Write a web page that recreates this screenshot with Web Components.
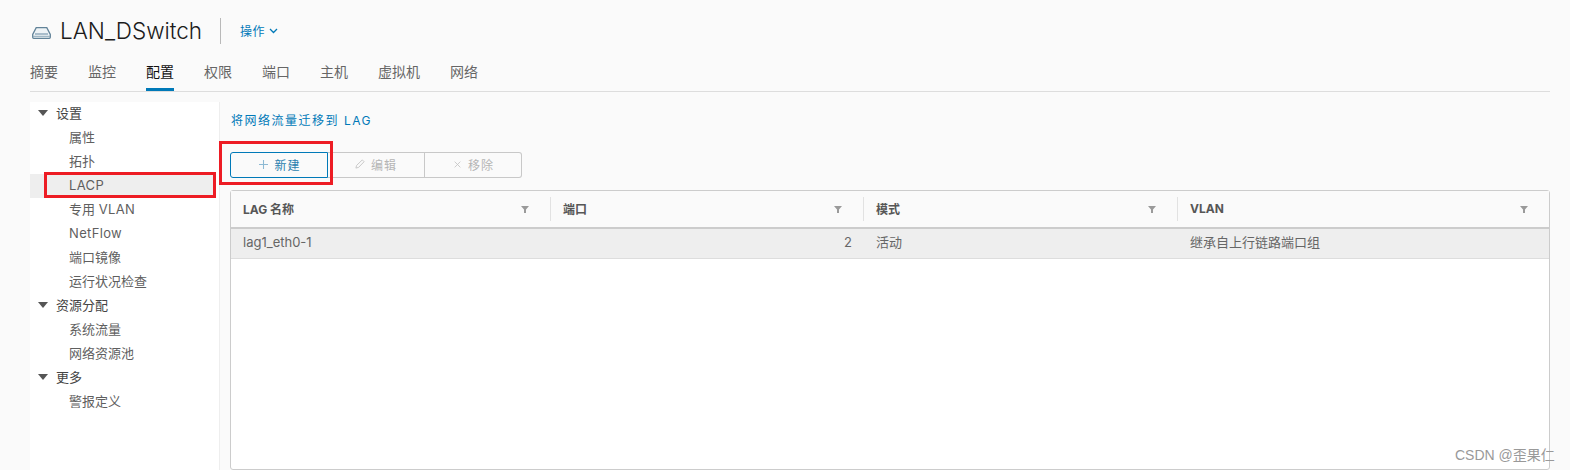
<!DOCTYPE html>
<html lang="zh">
<head>
<meta charset="utf-8">
<title>LAN_DSwitch</title>
<style>
  html, body { margin: 0; height: 470px; overflow: hidden; background: #fafafa; }
  body { font-family: Inter, "Noto Sans CJK SC", sans-serif; color: #565656; }
</style>
</head>
<body>
<vc-page>
  <vc-header slot="header" name="LAN_DSwitch" action="操作"></vc-header>
  <vc-tabs slot="tabs" active="配置" items="摘要,监控,配置,权限,端口,主机,虚拟机,网络"></vc-tabs>
  <vc-tree slot="side"></vc-tree>
  <lag-panel slot="main"></lag-panel>
</vc-page>
<script>
class VcPage extends HTMLElement {
    constructor() {
        super();
        this.attachShadow({ mode: 'open' });
        this.shadowRoot.innerHTML = `
        <style>
            :host { display: block; height: 470px; position: relative; overflow: hidden; }
            .body { display: flex; padding: 10px 20px 0 30px; height: 368px; }
            .side { flex: 0 0 190px; }
            .main { flex: 1; min-width: 0; padding-left: 10px; }
            .mark {
                position: absolute; left: 1455px; top: 444px;
                font: 14px "Liberation Sans", "Noto Sans CJK SC", sans-serif; color: #999; white-space: nowrap;
            }
            .note { position: absolute; border: 3px solid #ed1c24; box-sizing: border-box; }
        </style>
        <slot name="header"></slot>
        <slot name="tabs"></slot>
        <div class="body">
            <div class="side"><slot name="side"></slot></div>
            <div class="main"><slot name="main"></slot></div>
        </div>
        <div class="note" style="left:44px;top:172px;width:172px;height:26px"></div>
        <div class="note" style="left:219px;top:141px;width:114px;height:44px"></div>
        <div class="mark">CSDN @歪果仁</div>`;
    }
}

class VcHeader extends HTMLElement {
    constructor() {
        super();
        this.attachShadow({ mode: 'open' });
    }

    connectedCallback() {
        this.shadowRoot.innerHTML = `
        <style>
            :host { display: flex; align-items: center; height: 61px; padding: 0 0 0 32px; box-sizing: border-box; }
            svg.sw { width: 19px; height: 12px; margin-right: 9px; margin-top: 5px; }
            .name { font-size: 22.500px; font-weight: 300; color: #1b1b1b; line-height: 30px; white-space: nowrap; }
            .sep { width: 1px; height: 26px; background: #b9b9b9; margin: 0 19px 0 18px; }
            .act { display: flex; align-items: center; gap: 4px; font-size: 12px; color: #0079b8; letter-spacing: .5px; }
            .act svg { width: 9px; height: 6px; }
        </style>
        <svg class="sw" viewBox="0 0 19 12">
            <path d="M4.200.7h10.600L18.300 7.500v2.800a1 1 0 0 1-1 1H1.700a1 1 0 0 1-1-1V7.500z" fill="#eef3f6" stroke="#628399" stroke-width="1.300"/>
            <path d="M3 6h13v2H3z" fill="#a9bdcb"/>
            <path d="M1 9.300h17" stroke="#8ea8ba"/>
        </svg>
        <span class="name">${this.getAttribute('name')}</span>
        <span class="sep"></span>
        <span class="act">${this.getAttribute('action')}
            <svg viewBox="0 0 9 6"><path d="M1 1l3.500 3.500L8 1" fill="none" stroke="#0079b8" stroke-width="1.300"/></svg>
        </span>`;
    }
}

class VcTabs extends HTMLElement {
    constructor() {
        super();
        this.attachShadow({ mode: 'open' });
    }

    connectedCallback() {
        const active = this.getAttribute('active');
        const tabs = this.getAttribute('items').split(',').map(t =>
            `<span class="tab ${t === active ? 'on' : ''}">${t}</span>`).join('');
        this.shadowRoot.innerHTML = `
        <style>
            :host { display: flex; gap: 30px; height: 30px; margin: 0 20px 0 30px; border-bottom: 1px solid #ddd; }
            .tab { font-size: 14px; line-height: 22px; color: #666; height: 27px; }
            .on { color: #111; border-bottom: 3px solid #0079b8; }
        </style>
        ${tabs}`;
    }
}

class VcTree extends HTMLElement {
    constructor() {
        super();
        this.attachShadow({ mode: 'open' });
        this.groups = [
            ['设置', ['属性', '拓扑', 'LACP', '专用 VLAN', 'NetFlow', '端口镜像', '运行状况检查']],
            ['资源分配', ['系统流量', '网络资源池']],
            ['更多', ['警报定义']]
        ];
    }

    connectedCallback() {
        const latin = s => s.replace(/[A-Za-z]+/g, m => `<span class="l">${m}</span>`);
        const rows = this.groups.map(([name, kids]) => `
            <div class="row head"><i></i>${name}</div>
            ${kids.map(k => `<div class="row kid ${k === 'LACP' ? 'sel' : ''}">${latin(k)}</div>`).join('')}`).join('');
        this.shadowRoot.innerHTML = `
        <style>
            :host { display: block; height: 100%; background: #fff; border-right: 1px solid #eee; box-sizing: border-box; }
            .row { height: 24px; line-height: 22px; font-size: 13px; color: #5f5f5f; white-space: nowrap; margin-right: 3px; }
            .head { display: flex; align-items: center; padding: 0 0 2px 8px; box-sizing: border-box; color: #444; }
            .head i { width: 0; height: 0; margin-right: 8px; border: 5px solid transparent; border-top: 6px solid #555; border-bottom: 0; }
            .kid { padding-left: 39px; }
            .l { letter-spacing: .35px; }
            .sel { background: #eee; }
        </style>
        ${rows}`;
    }
}

class LagPanel extends HTMLElement {
    constructor() {
        super();
        this.attachShadow({ mode: 'open' });
        this.shadowRoot.innerHTML = `
        <style>
            :host { display: block; }
            .link { font-size: 12px; letter-spacing: 1.500px; color: #0079b8; line-height: 16px; margin: 11px 0 0 1px; }
            .btns { display: flex; margin-top: 23px; height: 26px; }
            .btn {
                display: flex; align-items: center; justify-content: center; gap: 6px; box-sizing: border-box; padding-bottom: 2px;
                border: 1px solid #c8c8c8; border-left: 0; font-size: 12px; letter-spacing: 1px; color: #b5b5b5;
            }
            .btn svg { width: 10px; height: 10px; }
            .new { width: 98px; padding-left: 2px; border: 1px solid #0079b8; border-radius: 3px 0 0 3px; color: #2a7fae; }
            .new svg { width: 9px; height: 9px; }
            .edit { width: 97px; }
            .del { width: 97px; padding-left: 2px; border-radius: 0 3px 3px 0; }
            .del svg { width: 7px; height: 7px; margin-right: 1px; }
        </style>
        <div class="link">将网络流量迁移到 LAG</div>
        <div class="btns">
            <div class="btn new"><svg viewBox="0 0 11 11"><path d="M5.500 0v11M0 5.500h11" stroke="#8db9d3" stroke-width="1.300"/></svg>新建</div>
            <div class="btn edit"><svg viewBox="0 0 11 11"><path d="M1 10l.8-3L8 1l2 2-6 6.200z" fill="none" stroke="#c4c4c4"/></svg>编辑</div>
            <div class="btn del"><svg viewBox="0 0 11 11"><path d="M1 1l9 9M10 1l-9 9" stroke="#c4c4c4" stroke-width="1.300"/></svg>移除</div>
        </div>
        <lag-grid></lag-grid>`;
    }
}

class LagGrid extends HTMLElement {
    constructor() {
        super();
        this.attachShadow({ mode: 'open' });
        const funnel = `<svg viewBox="0 0 8 7"><path d="M0 0h8L5 3.500V7H3V3.500z" fill="#9a9a9a"/></svg>`;
        const cols = ['LAG 名称', '端口', '模式', 'VLAN'];
        this.shadowRoot.innerHTML = `
        <style>
            :host {
                display: flex; flex-direction: column; box-sizing: border-box; height: 280px; margin-top: 12px;
                background: #fff; border: 1px solid #ccc; border-radius: 3px;
                --cols: 320px 313px 314px 1fr;
            }
            .head, .row { display: grid; grid-template-columns: var(--cols); box-sizing: border-box; }
            .head { height: 38px; background: #fafafa; border-bottom: 2px solid #ccc; font-size: 12px; font-weight: 700; color: #565656; }
            .h { display: flex; align-items: center; justify-content: space-between; padding: 0 22px 2px 12px; position: relative; }
            .h:last-child { padding-right: 21px; }
            .h + .h::before { content: ""; position: absolute; left: -1px; top: 6px; bottom: 6px; width: 1px; background: #e2e2e2; }
            .h svg { width: 8px; height: 7px; margin-top: 3px; }
            .row { height: 30px; line-height: 27px; background: #eee; border-bottom: 1px solid #ddd; font-size: 13px; color: #666; }
            .c { padding: 0 12px; }
            .num { text-align: right; padding-right: 12px; }
        </style>
        <div class="head">${cols.map(c => `<div class="h"><span>${c}</span>${funnel}</div>`).join('')}</div>
        <div class="row">
            <div class="c">lag1_eth0-1</div>
            <div class="c num">2</div>
            <div class="c">活动</div>
            <div class="c">继承自上行链路端口组</div>
        </div>`;
    }
}

customElements.define('vc-page', VcPage);
customElements.define('vc-header', VcHeader);
customElements.define('vc-tabs', VcTabs);
customElements.define('vc-tree', VcTree);
customElements.define('lag-panel', LagPanel);
customElements.define('lag-grid', LagGrid);
</script>
</body>
</html>
